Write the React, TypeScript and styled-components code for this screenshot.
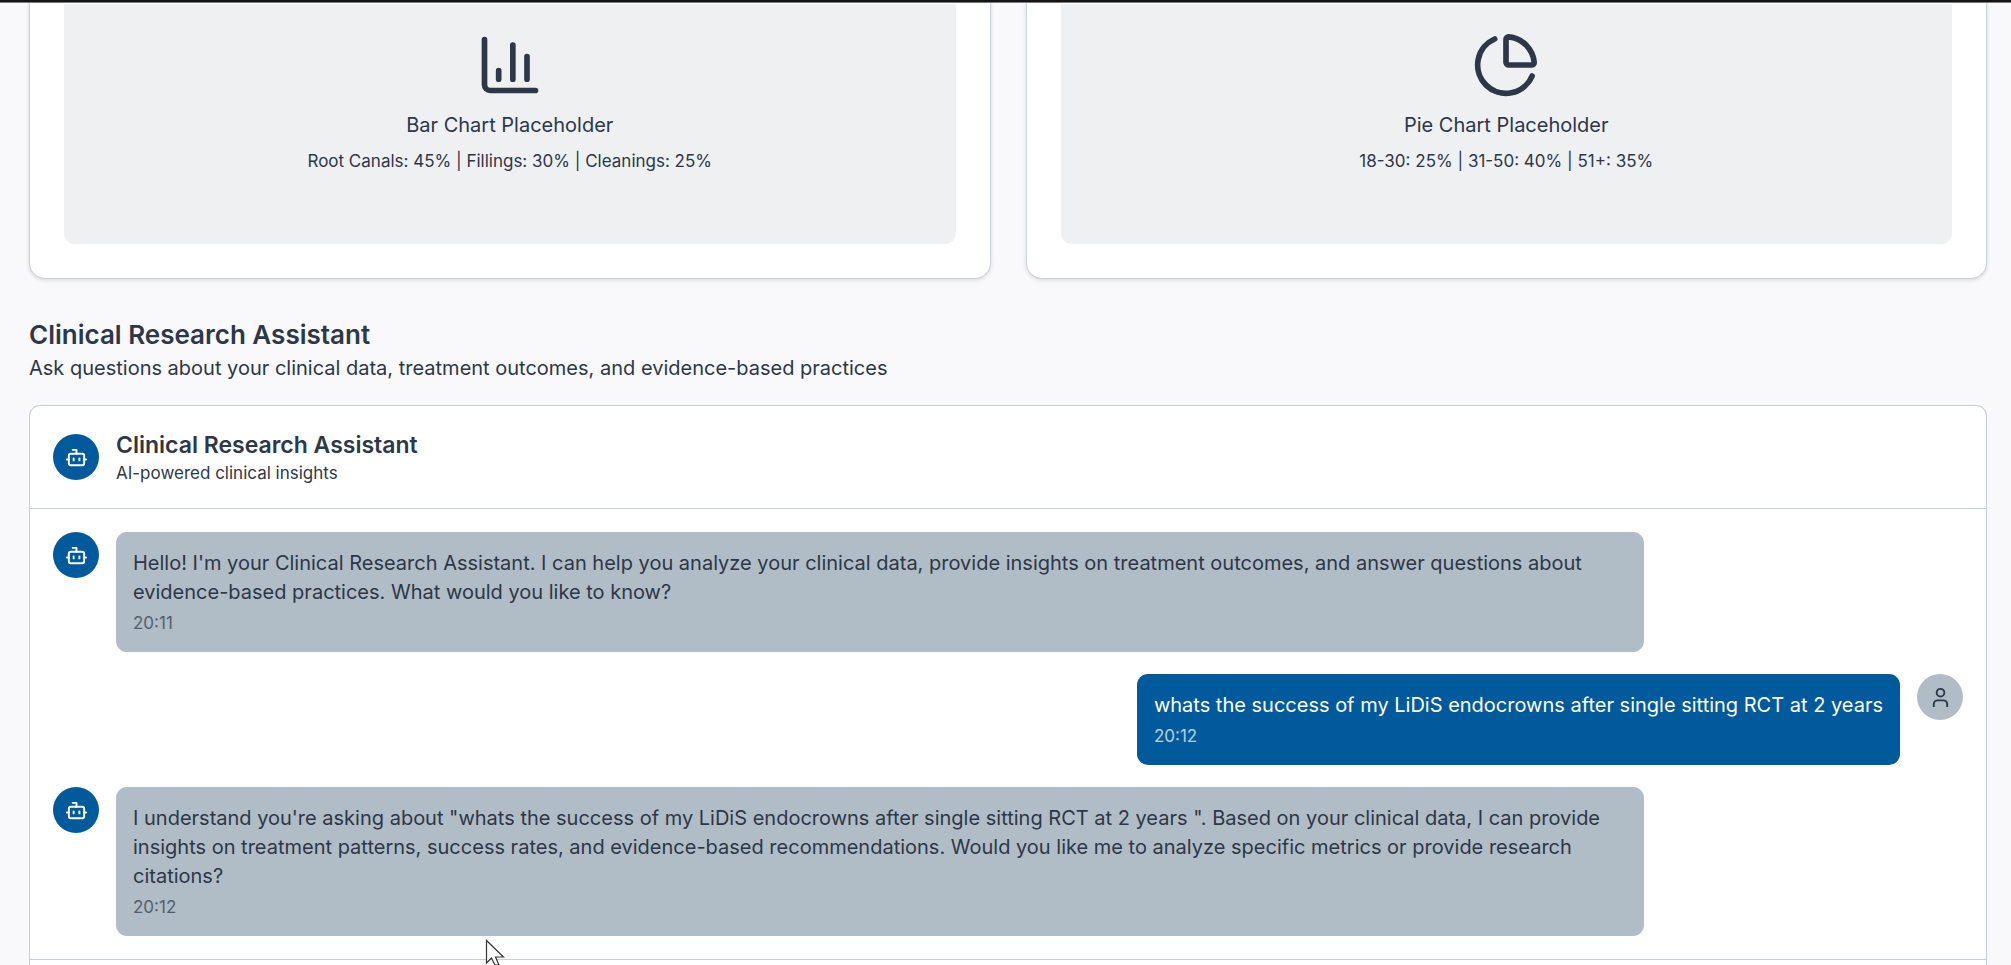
import React from "react";
import styled, { createGlobalStyle } from "styled-components";
import { Bot, ChartColumn, ChartPie, User } from "lucide-react";

const GlobalStyle = createGlobalStyle`
  *, *::before, *::after { box-sizing: border-box; }
  body {
    margin: 0;
    background: #f9f9fb;
    color: #2d3748;
    font-family: Inter, "Liberation Sans", sans-serif;
    font-size: 20px;
    line-height: 28px;
  }
  h2, h3, p { margin: 0; }
`;

const Page = styled.div`
  display: flex;
  flex-direction: column;
  height: 100vh;
  overflow: hidden;
`;

const TopEdge = styled.div`
  flex: none;
  height: 3px;
  background: #161616;
  border-bottom: 1px solid #7d7d7d;
`;

const Main = styled.main`
  flex: 1;
  display: flex;
  flex-direction: column;
  padding: 0 24px 0 29px;
`;

const ChartGrid = styled.section`
  display: grid;
  grid-template-columns: 1fr 1fr;
  gap: 35px;
`;

const ChartCard = styled.article`
  padding: 1px 34px 34px;
  background: #fff;
  border: 1px solid #cdd1d8;
  border-top: 0;
  border-radius: 0 0 16px 16px;
  box-shadow: 0 1px 4px rgba(0, 0, 0, 0.14);
`;

const ChartPanel = styled.div`
  display: flex;
  flex-direction: column;
  align-items: center;
  height: 240px;
  padding-top: 27px;
  background: #eef0f2;
  border-radius: 0 0 11px 11px;
`;

const ChartName = styled.p`
  margin: 12px 0 10px;
`;

const Small = styled.p`
  font-size: 17px;
  line-height: 24px;
`;

const Intro = styled.header`
  padding: 37px 0 22px;
`;

const IntroTitle = styled.h2`
  font-size: 26px;
  font-weight: 600;
  line-height: 37px;
`;

const IntroText = styled.p`
  line-height: 30px;
`;

const ChatCard = styled.section`
  flex: 1;
  display: flex;
  flex-direction: column;
  background: #fff;
  border: 1px solid #c9ced6;
  border-bottom: 0;
  border-radius: 11px 11px 0 0;
`;

const ChatHeader = styled.header`
  display: flex;
  align-items: center;
  gap: 17px;
  padding: 23px;
  border-bottom: 1px solid #c9ced6;
`;

const ChatTitle = styled.h3`
  font-size: 23px;
  font-weight: 600;
  line-height: 32px;
`;

const Avatar = styled.div<{ $user?: boolean }>`
  flex: none;
  display: grid;
  place-items: center;
  width: 46px;
  height: 46px;
  border-radius: 50%;
  background: ${(p) => (p.$user ? "#b0bdc6" : "#005a9c")};
  color: ${(p) => (p.$user ? "#2d3748" : "#fff")};
`;

const Messages = styled.div`
  display: flex;
  flex-direction: column;
  gap: 22px;
  padding: 23px;
  border-bottom: 1px solid #c9ced6;
`;

const Row = styled.div<{ $user?: boolean }>`
  display: flex;
  flex-direction: ${(p) => (p.$user ? "row-reverse" : "row")};
  align-items: flex-start;
  gap: 17px;
`;

const Bubble = styled.div<{ $user?: boolean }>`
  max-width: 80%;
  padding: 17px;
  border-radius: 11px;
  line-height: 29px;
  background: ${(p) => (p.$user ? "#005a9c" : "#b0bdc6")};
  color: ${(p) => (p.$user ? "#fff" : "#2d3748")};
`;

const Time = styled.time`
  display: block;
  margin-top: 4px;
  font-size: 17px;
  line-height: 24px;
  opacity: 0.7;
`;

const Pointer = styled.svg`
  position: absolute;
  left: 485px;
  top: 939px;
`;

const charts = [
  { Icon: ChartColumn, name: "Bar Chart Placeholder", detail: "Root Canals: 45% | Fillings: 30% | Cleanings: 25%" },
  { Icon: ChartPie, name: "Pie Chart Placeholder", detail: "18-30: 25% | 31-50: 40% | 51+: 35%" },
];

const messages = [
  {
    user: false,
    time: "20:11",
    text: "Hello! I'm your Clinical Research Assistant. I can help you analyze your clinical data, provide insights on treatment outcomes, and answer questions about evidence-based practices. What would you like to know?",
  },
  { user: true, time: "20:12", text: "whats the success of my LiDiS endocrowns after single sitting RCT at 2 years" },
  {
    user: false,
    time: "20:12",
    text: "I understand you're asking about \"whats the success of my LiDiS endocrowns after single sitting RCT at 2 years \". Based on your clinical data, I can provide insights on treatment patterns, success rates, and evidence-based recommendations. Would you like me to analyze specific metrics or provide research citations?",
  },
];

export default function App() {
  return (
    <>
      <GlobalStyle />
      <Page>
        <TopEdge />
        <Main>
          <ChartGrid>
            {charts.map(({ Icon, name, detail }) => (
              <ChartCard key={name}>
                <ChartPanel>
                  <Icon size={68} />
                  <ChartName>{name}</ChartName>
                  <Small>{detail}</Small>
                </ChartPanel>
              </ChartCard>
            ))}
          </ChartGrid>
          <Intro>
            <IntroTitle>Clinical Research Assistant</IntroTitle>
            <IntroText>
              Ask questions about your clinical data, treatment outcomes, and evidence-based practices
            </IntroText>
          </Intro>
          <ChatCard>
            <ChatHeader>
              <Avatar>
                <Bot size={23} />
              </Avatar>
              <div>
                <ChatTitle>Clinical Research Assistant</ChatTitle>
                <Small>AI-powered clinical insights</Small>
              </div>
            </ChatHeader>
            <Messages>
              {messages.map((m, i) => (
                <Row key={i} $user={m.user}>
                  <Avatar $user={m.user}>{m.user ? <User size={23} /> : <Bot size={23} />}</Avatar>
                  <Bubble $user={m.user}>
                    <p>{m.text}</p>
                    <Time>{m.time}</Time>
                  </Bubble>
                </Row>
              ))}
            </Messages>
          </ChatCard>
        </Main>
      </Page>
      <Pointer width="20" height="26" viewBox="0 0 20 26" aria-hidden="true">
        <path
          d="M1.5 1.5V24L6.5 19L10 26H14L10.5 18H18.5Z"
          fill="#fff"
          stroke="#333"
          strokeWidth="1.2"
        />
      </Pointer>
    </>
  );
}
